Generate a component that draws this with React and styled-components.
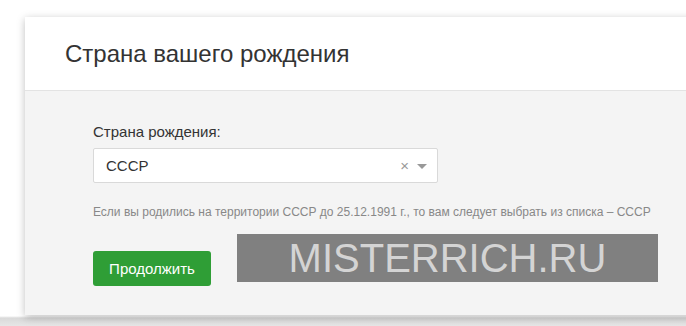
import React from "react";
import styled, { createGlobalStyle } from "styled-components";

const GlobalStyle = createGlobalStyle`
  html, body {
    margin: 0;
    padding: 0;
    background: #ffffff;
    font-family: "Liberation Sans", Arial, sans-serif;
    overflow: hidden;
  }
`;

const Page = styled.div`
  width: 686px;
  height: 326px;
  padding: 17px 0 0 25px;
  box-sizing: border-box;
  background: linear-gradient(to bottom, #ffffff 0, #ffffff 316px, #d9d9d9 318px, #e6e6e6 326px);
`;

const Card = styled.div`
  position: relative;
  width: 680px;
  background: #f4f4f4;
  box-shadow: 0 2px 8px rgba(0, 0, 0, 0.25);
`;

const Header = styled.div`
  height: 73px;
  display: flex;
  align-items: center;
  padding-left: 40px;
  background: #ffffff;
  border-bottom: 1px solid #e3e3e3;
`;

const Title = styled.h1`
  margin: 0;
  font-size: 24px;
  font-weight: normal;
  color: #333333;
`;

const Body = styled.div`
  padding: 32px 0 29px 68px;
  display: flex;
  flex-direction: column;
`;

const Label = styled.label`
  font-size: 15px;
  color: #333333;
  margin-bottom: 8px;
`;

const Select = styled.div`
  width: 345px;
  height: 35px;
  box-sizing: border-box;
  display: flex;
  align-items: center;
  padding: 0 10px 0 12px;
  background: #ffffff;
  border: 1px solid #d9d9d9;
  border-radius: 2px;
  font-size: 15px;
  color: #333333;
`;

const Value = styled.span`
  flex: 1;
`;

const Clear = styled.span`
  font-size: 15px;
  color: #999999;
  margin-right: 8px;
`;

const Arrow = styled.span`
  width: 0;
  height: 0;
  border-left: 5px solid transparent;
  border-right: 5px solid transparent;
  border-top: 5px solid #999999;
  margin-top: 2px;
`;

const Hint = styled.p`
  margin: 22px 0 0;
  font-size: 12px;
  color: #888888;
`;

const Actions = styled.div`
  margin-top: 32px;
  display: flex;
`;

const Button = styled.button`
  width: 118px;
  height: 35px;
  border: none;
  border-radius: 3px;
  background: #2f9e36;
  color: #ffffff;
  font-family: "Liberation Sans", Arial, sans-serif;
  font-size: 15px;
  cursor: pointer;
`;

const Watermark = styled.div`
  position: absolute;
  left: 212px;
  top: 217px;
  width: 421px;
  height: 48px;
  background: #808080;
  color: #d4d4d4;
  font-size: 40px;
  display: flex;
  align-items: center;
  justify-content: center;
`;

export default function App() {
  return (
    <>
      <GlobalStyle />
      <Page>
        <Card>
          <Header>
            <Title>Страна вашего рождения</Title>
          </Header>
          <Body>
            <Label>Страна рождения:</Label>
            <Select>
              <Value>СССР</Value>
              <Clear>×</Clear>
              <Arrow />
            </Select>
            <Hint>
              Если вы родились на территории СССР до 25.12.1991 г., то вам следует выбрать из списка – СССР
            </Hint>
            <Actions>
              <Button>Продолжить</Button>
            </Actions>
          </Body>
          <Watermark>MISTERRICH.RU</Watermark>
        </Card>
      </Page>
    </>
  );
}
